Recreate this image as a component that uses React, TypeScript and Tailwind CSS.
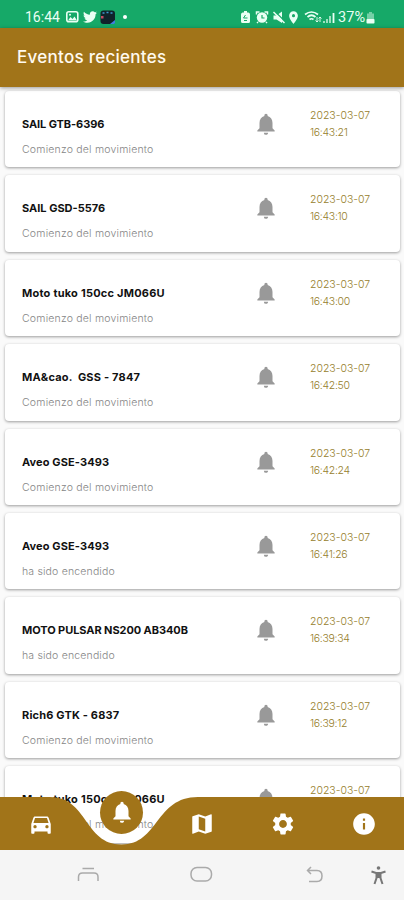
import React from 'react';
import { clsx } from 'clsx';
import { FaTwitter } from 'react-icons/fa';
import {
  MdDirectionsCar,
  MdInfo,
  MdLocationOn,
  MdMap,
  MdNotifications,
  MdSettings,
} from 'react-icons/md';

const MOVING = { text: "Comienzo del movimiento", tracking: "tracking-[0.2px]" };
const STARTED = { text: "ha sido encendido", tracking: "tracking-[0.17px]" };

const events = [
  { name: "SAIL GTB-6396", tracking: "tracking-[-0.08px]", status: MOVING, date: "2023-03-07", time: "16:43:21" },
  { name: "SAIL GSD-5576", tracking: "tracking-[0px]", status: MOVING, date: "2023-03-07", time: "16:43:10" },
  { name: "Moto tuko 150cc JM066U", tracking: "tracking-[0.23px]", status: MOVING, date: "2023-03-07", time: "16:43:00" },
  { name: "MA&cao.  GSS - 7847", tracking: "tracking-[0.2px]", status: MOVING, date: "2023-03-07", time: "16:42:50" },
  { name: "Aveo GSE-3493", tracking: "tracking-[0.12px]", status: MOVING, date: "2023-03-07", time: "16:42:24" },
  { name: "Aveo GSE-3493", tracking: "tracking-[0.12px]", status: STARTED, date: "2023-03-07", time: "16:41:26" },
  { name: "MOTO PULSAR NS200 AB340B", tracking: "tracking-[-0.07px]", status: STARTED, date: "2023-03-07", time: "16:39:34" },
  { name: "Rich6 GTK - 6837", tracking: "tracking-[0.17px]", status: MOVING, date: "2023-03-07", time: "16:39:12" },
  { name: "Moto tuko 150cc JM066U", tracking: "tracking-[0.23px]", status: MOVING, date: "2023-03-07", time: "16:39:02" },
];

const StatusBar = () => (
  <div className="flex h-7 shrink-0 items-center bg-[#16a968] pt-1.5 pl-[25px] text-[#e9fff4]">
    <span className="w-[40px] font-[Roboto] text-[14px] leading-none">16:44</span>
    <svg width="15" height="14" viewBox="0 0 15 14">
      <rect x="1.800" y="1.800" width="11" height="10" rx="2" fill="none" stroke="currentColor" strokeWidth="1.600" />
      <path d="M3 10.500L5.500 7L7.500 9L9.500 6.500L12 10.500Z" fill="currentColor" />
      <circle cx="5" cy="4.800" r="1" fill="currentColor" />
    </svg>
    <FaTwitter size={14} className="ml-[3px]" />
    <svg className="ml-[3px]" width="16" height="15" viewBox="0 0 16 15">
      <rect x="0.500" y="0.500" width="14.500" height="13.500" rx="3" fill="#10232b" />
      <path d="M2.500 3h2M6.500 2.500h2M10.500 3h2" stroke="#3d9bd0" strokeWidth="1.500" />
      <rect x="1" y="6" width="2.500" height="2.500" fill="#c74c64" />
      <path d="M10 14l5-4v3l-1 1z" fill="#3f7ee0" />
    </svg>
    <span className="ml-[7px] size-1 rounded-full bg-white" />
    <div className="ml-auto flex items-center pr-[29px]">
      {/* Battery saver, alarm and muted speaker */}
      <svg width="46" height="14" viewBox="0 0 46 14">
        <path d="M4 1h3v1.500h1.500Q10 3 10 4.500V11.500Q10 13 8.500 13H2.500Q1 13 1 11.500V4.500Q1 3 2.500 2.500H4Z" fill="currentColor" />
        <path d="M5.500 5L3.500 8H7.500M4 10.500H7" stroke="#16a968" fill="none" strokeWidth="1" />
        <circle cx="22" cy="7.500" r="5.200" fill="currentColor" />
        <path d="M16.500 4.500V2H19.500M24.500 2H27.500V4.500M18 12L17 13M26 12L27 13" stroke="currentColor" strokeWidth="1.500" fill="none" />
        <path d="M22 5V8H24.500" stroke="#16a968" fill="none" strokeWidth="1.200" />
        <path d="M33.500 5.500H36.500L42 1.500V13L36.500 9.500H33.500Z" fill="currentColor" />
        <path d="M34.500 1L45.500 12" stroke="#16a968" strokeWidth="1.200" />
        <path d="M33.500 2L44.500 13" stroke="currentColor" strokeWidth="1.500" />
      </svg>
      <MdLocationOn size={15} />
      <svg className="ml-[3px]" width="34" height="14" viewBox="0 0 34 14" fill="none" stroke="currentColor">
        <path d="M1 4.500Q7.500-0.500 14 4.500M3.500 7Q7.500 3.500 11.500 7M5.500 9.500Q7.500 8 9.500 9.500" strokeWidth="1.700" />
        <path d="M13 7v5M16 7v5M11.500 10.500L13 12l1.500-1.500M14.500 8.500L16 7l1.500 1.500" strokeWidth="0.900" />
        <path d="M20 13v-2M23 13V9M26 13V6" strokeWidth="1.800" opacity="0.700" />
        <path d="M29.500 13V3" strokeWidth="1.800" />
      </svg>
      <span className="mt-0.5 font-[Roboto] text-[14.500px] leading-none">37%</span>
      <svg className="ml-px" width="9" height="13" viewBox="0 0 9 13">
        <path d="M3 1h3v1.500h2V8H1V2.500h2z" fill="currentColor" opacity="0.450" />
        <rect x="0.500" y="8" width="8" height="4.500" rx="0.800" fill="currentColor" />
      </svg>
    </div>
  </div>
);

const EventCard = ({ event }: { event: (typeof events)[number] }) => (
  <div className="flex h-[76.4px] shrink-0 rounded-[4px] bg-white pl-[17px] shadow-[0_1px_3px_rgba(0,0,0,0.38)]">
    <div className="w-[231px] pt-[25px] whitespace-pre">
      <h2 className={clsx("text-[11px] leading-4 font-bold text-[#111]", event.tracking)}>{event.name}</h2>
      <p className={clsx("mt-[10px] text-[10.500px] leading-4 font-light text-[#858585]", event.status.tracking)}>{event.status.text}</p>
    </div>
    <MdNotifications size={26} className="mt-5 shrink-0 text-[#999]" />
    <div className="ml-[31px] pt-4 text-[10.500px] leading-[17px] font-light text-[#96802c]">
      <p className="tracking-[0px]">{event.date}</p>
      <p className="tracking-[-0.3px]">{event.time}</p>
    </div>
  </div>
);

const BottomNav = () => (
  <nav className="absolute inset-x-0 bottom-[50px] h-[53px] text-white">
    {/* Bar with the notch under the active tab */}
    <svg className="absolute inset-0" width="404" height="53" viewBox="0 0 404 53">
      <path d="M0 0H50C88 0 84 47.500 121.500 47.500S155 0 198 0H404V53H0Z" fill="#a17419" />
    </svg>
    <div className="relative grid h-full grid-cols-5 items-center justify-items-center pt-px pl-px">
      <MdDirectionsCar size={26} />
      <div className="mt-[-24px] flex size-[43px] items-center justify-center rounded-full bg-[#a17419]">
        <MdNotifications size={26} />
      </div>
      <MdMap size={26} />
      <MdSettings size={26} />
      <MdInfo size={26} />
    </div>
  </nav>
);

const SystemNav = () => (
  <div className="flex h-[50px] shrink-0 items-center bg-[#f5f5f5] text-[#aaa]">
    <svg width="404" height="50" viewBox="0 0 404 50" fill="none" stroke="currentColor" strokeWidth="1.500">
      <path d="M82.500 18.500H94M78.500 31V27Q78.500 23 82.500 23H94Q98 23 98 27V31" />
      <rect x="191" y="17.500" width="20.500" height="13.500" rx="6" />
      <path d="M311 17L307.500 20.500L311 24M307.500 20.500H317Q322 20.500 322 26T317 31.500H309" />
      <g stroke="#777" strokeWidth="2">
        <circle cx="378.500" cy="18" r="1.800" fill="#777" stroke="none" />
        <path d="M371.500 21.500L376 23H381L385.500 21.500M376.500 23V28L374.500 34M380.500 23V28L382.500 34M376.500 27H380.500M378.500 22V27" />
      </g>
    </svg>
  </div>
);

const App = () => {
  return (
    <div className="relative flex h-[900px] w-[404px] flex-col overflow-hidden bg-[#fafafa] font-['Inter',sans-serif]">
      <StatusBar />
      <header className="relative z-10 flex h-[59px] shrink-0 items-center bg-[#a17419] pl-[17px] shadow-[0_1px_4px_rgba(0,0,0,0.4)]">
        <h1 className="text-[17px] font-medium tracking-[0.27px] text-[#fffaf0]">Eventos recientes</h1>
      </header>
      <main className="flex min-h-0 flex-1 flex-col gap-2 overflow-hidden pt-1 pr-[4px] pl-[5px]">
        {events.map((event, index) => (
          <EventCard key={index} event={event} />
        ))}
      </main>
      <BottomNav />
      <SystemNav />
    </div>
  );
};

export default App;
